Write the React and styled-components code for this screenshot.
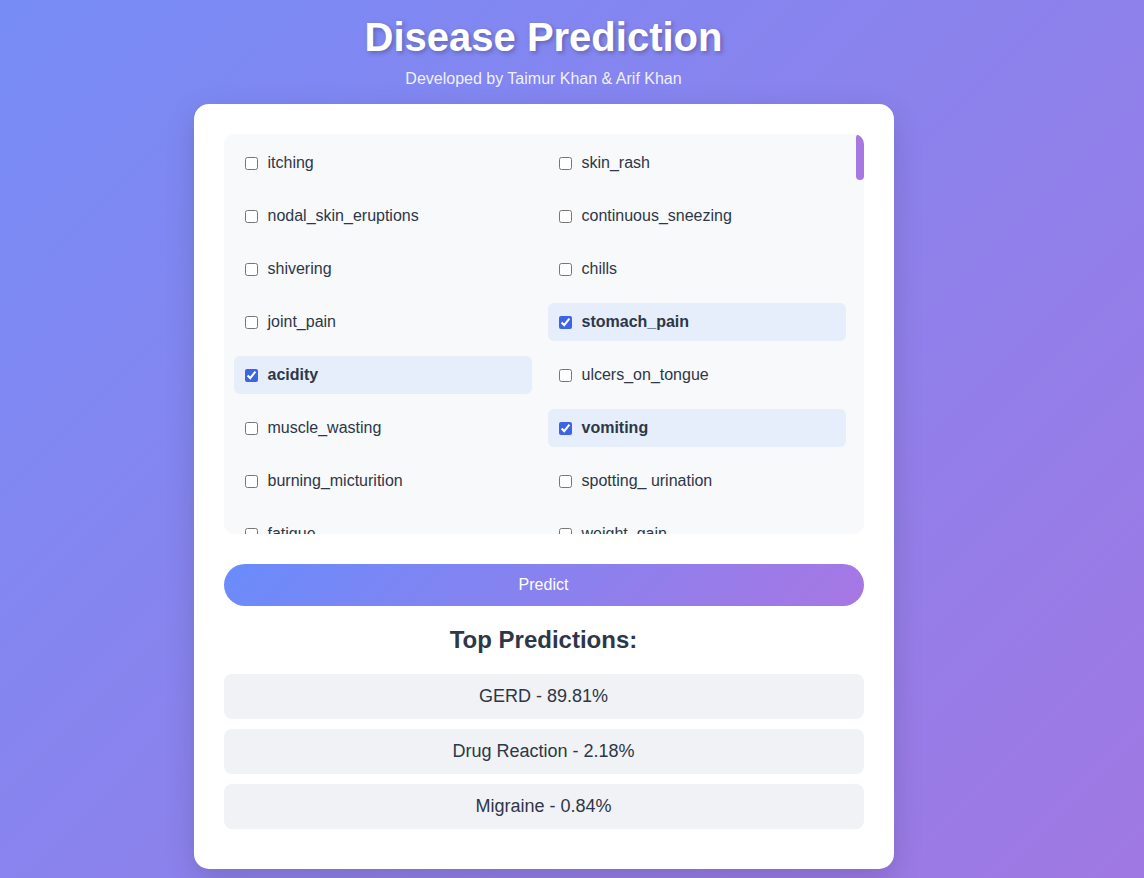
import React, { useState } from 'react';
import styled, { createGlobalStyle } from 'styled-components';

const GlobalStyle = createGlobalStyle`
    html, body {
        margin: 0;
        padding: 0;
    }
    body {
        font-family: "Liberation Sans", Arial, sans-serif;
        background: linear-gradient(135deg, #778cf6 0%, #a078e3 100%);
        min-height: 100vh;
    }
`;

const symptoms = [
    'itching', 'skin_rash', 'nodal_skin_eruptions', 'continuous_sneezing', 'shivering', 'chills',
    'joint_pain', 'stomach_pain', 'acidity', 'ulcers_on_tongue', 'muscle_wasting', 'vomiting',
    'burning_micturition', 'spotting_ urination', 'fatigue', 'weight_gain', 'anxiety',
    'cold_hands_and_feets', 'mood_swings', 'weight_loss', 'restlessness', 'lethargy',
    'patches_in_throat', 'irregular_sugar_level', 'cough', 'high_fever', 'sunken_eyes',
    'breathlessness', 'sweating', 'dehydration', 'indigestion', 'headache', 'yellowish_skin',
    'dark_urine', 'nausea', 'loss_of_appetite', 'pain_behind_the_eyes', 'back_pain', 'constipation',
    'abdominal_pain', 'diarrhoea', 'mild_fever', 'yellow_urine', 'yellowing_of_eyes',
    'acute_liver_failure', 'fluid_overload', 'swelling_of_stomach', 'swelled_lymph_nodes', 'malaise',
    'blurred_and_distorted_vision', 'phlegm', 'throat_irritation', 'redness_of_eyes', 'sinus_pressure',
    'runny_nose', 'congestion', 'chest_pain', 'weakness_in_limbs', 'fast_heart_rate',
    'pain_during_bowel_movements', 'pain_in_anal_region', 'bloody_stool', 'irritation_in_anus',
    'neck_pain', 'dizziness', 'cramps', 'bruising', 'obesity', 'swollen_legs', 'swollen_blood_vessels',
    'puffy_face_and_eyes', 'enlarged_thyroid', 'brittle_nails', 'swollen_extremeties',
    'excessive_hunger', 'extra_marital_contacts', 'drying_and_tingling_lips', 'slurred_speech',
    'knee_pain', 'hip_joint_pain', 'muscle_weakness', 'stiff_neck', 'swelling_joints',
    'movement_stiffness', 'spinning_movements', 'loss_of_balance', 'unsteadiness',
    'weakness_of_one_body_side', 'loss_of_smell', 'bladder_discomfort', 'foul_smell_of urine',
    'continuous_feel_of_urine', 'passage_of_gases', 'internal_itching', 'toxic_look_(typhos)',
    'depression', 'irritability', 'muscle_pain', 'altered_sensorium', 'red_spots_over_body',
    'belly_pain', 'abnormal_menstruation', 'dischromic _patches', 'watering_from_eyes',
    'increased_appetite', 'polyuria', 'family_history', 'mucoid_sputum', 'rusty_sputum',
    'lack_of_concentration', 'visual_disturbances', 'receiving_blood_transfusion',
    'receiving_unsterile_injections', 'coma', 'stomach_bleeding', 'distention_of_abdomen',
    'history_of_alcohol_consumption', 'fluid_overload', 'blood_in_sputum', 'prominent_veins_on_calf',
    'palpitations', 'painful_walking', 'pus_filled_pimples', 'blackheads', 'scurring', 'skin_peeling',
    'silver_like_dusting', 'small_dents_in_nails', 'inflammatory_nails', 'blister',
    'red_sore_around_nose', 'yellow_crust_ooze',
];

const predictions = [
    { name: 'GERD', score: '89.81' },
    { name: 'Drug Reaction', score: '2.18' },
    { name: 'Migraine', score: '0.84' },
];

const Page = styled.div`
    display: flex;
    flex-direction: column;
    align-items: center;
    padding: 15px 57px 20px 0;
`;

const Title = styled.h1`
    margin: 0;
    font-size: 40px;
    font-weight: bold;
    color: #ffffff;
    text-shadow: 2px 2px 4px rgba(0, 0, 0, 0.25);
`;

const Subtitle = styled.p`
    margin: 10px 0 16px;
    font-size: 16px;
    color: rgba(255, 255, 255, 0.9);
`;

const Card = styled.div`
    box-sizing: border-box;
    width: 700px;
    padding: 30px 30px 40px;
    background: #ffffff;
    border-radius: 15px;
    box-shadow: 0 10px 30px rgba(0, 0, 0, 0.15);
`;

const ListFrame = styled.div`
    position: relative;
    border-radius: 10px;
    background: #f8f9fb;
    overflow: hidden;
`;

const SymptomList = styled.div`
    height: 400px;
    box-sizing: border-box;
    padding: 10px 18px 10px 10px;
    overflow-y: scroll;
    scrollbar-width: none;
    display: grid;
    grid-template-columns: 1fr 1fr;
    gap: 15px 16px;
    align-content: start;

    &::-webkit-scrollbar {
        display: none;
    }
`;

const ScrollThumb = styled.div`
    position: absolute;
    top: 0;
    right: 0;
    width: 8px;
    height: 46px;
    border-radius: 4px;
    background: #a777e3;
`;

const SymptomItem = styled.label`
    display: flex;
    align-items: center;
    gap: 10px;
    padding: 10px 11px 10px 10px;
    border-radius: 6px;
    font-size: 16px;
    line-height: 18px;
    color: #2d3748;
    cursor: pointer;
    background: ${(p) => (p.$checked ? '#e6eefb' : 'transparent')};
    font-weight: ${(p) => (p.$checked ? 'bold' : 'normal')};
`;

const Checkbox = styled.input`
    margin: 0 0 0 1px;
    width: 13px;
    height: 13px;
    accent-color: #3d63e6;
`;

const PredictButton = styled.button`
    display: block;
    width: 100%;
    margin-top: 30px;
    padding: 12px;
    border: none;
    border-radius: 25px;
    background: linear-gradient(135deg, #6a8cfb 0%, #a777e3 100%);
    color: #ffffff;
    font-family: inherit;
    font-size: 16px;
    line-height: 18px;
    cursor: pointer;
`;

const ResultsTitle = styled.h2`
    margin: 20px 0 20px;
    text-align: center;
    font-size: 24px;
    font-weight: bold;
    color: #2d3748;
`;

const ResultsList = styled.div`
    display: flex;
    flex-direction: column;
    gap: 10px;
`;

const ResultItem = styled.div`
    padding: 12px;
    border-radius: 8px;
    background: #f0f2f5;
    text-align: center;
    font-size: 18px;
    line-height: 21px;
    color: #2d3748;
`;

function App() {
    const [selected, setSelected] = useState(['stomach_pain', 'acidity', 'vomiting']);

    const toggle = (name) => {
        setSelected((prev) =>
            prev.includes(name) ? prev.filter((s) => s !== name) : [...prev, name]
        );
    };

    return (
        <Page>
            <GlobalStyle />
            <Title>Disease Prediction</Title>
            <Subtitle>Developed by Taimur Khan &amp; Arif Khan</Subtitle>
            <Card>
                <ListFrame>
                    <SymptomList>
                        {symptoms.map((s, i) => {
                            const checked = selected.includes(s);
                            return (
                                <SymptomItem key={i} $checked={checked}>
                                    <Checkbox
                                        type='checkbox'
                                        checked={checked}
                                        onChange={() => toggle(s)} />
                                    {s}
                                </SymptomItem>
                            );
                        })}
                    </SymptomList>
                    <ScrollThumb />
                </ListFrame>
                <PredictButton>Predict</PredictButton>
                <ResultsTitle>Top Predictions:</ResultsTitle>
                <ResultsList>
                    {predictions.map((p) => (
                        <ResultItem key={p.name}>{p.name} - {p.score}%</ResultItem>
                    ))}
                </ResultsList>
            </Card>
        </Page>
    );
}

export default App;
